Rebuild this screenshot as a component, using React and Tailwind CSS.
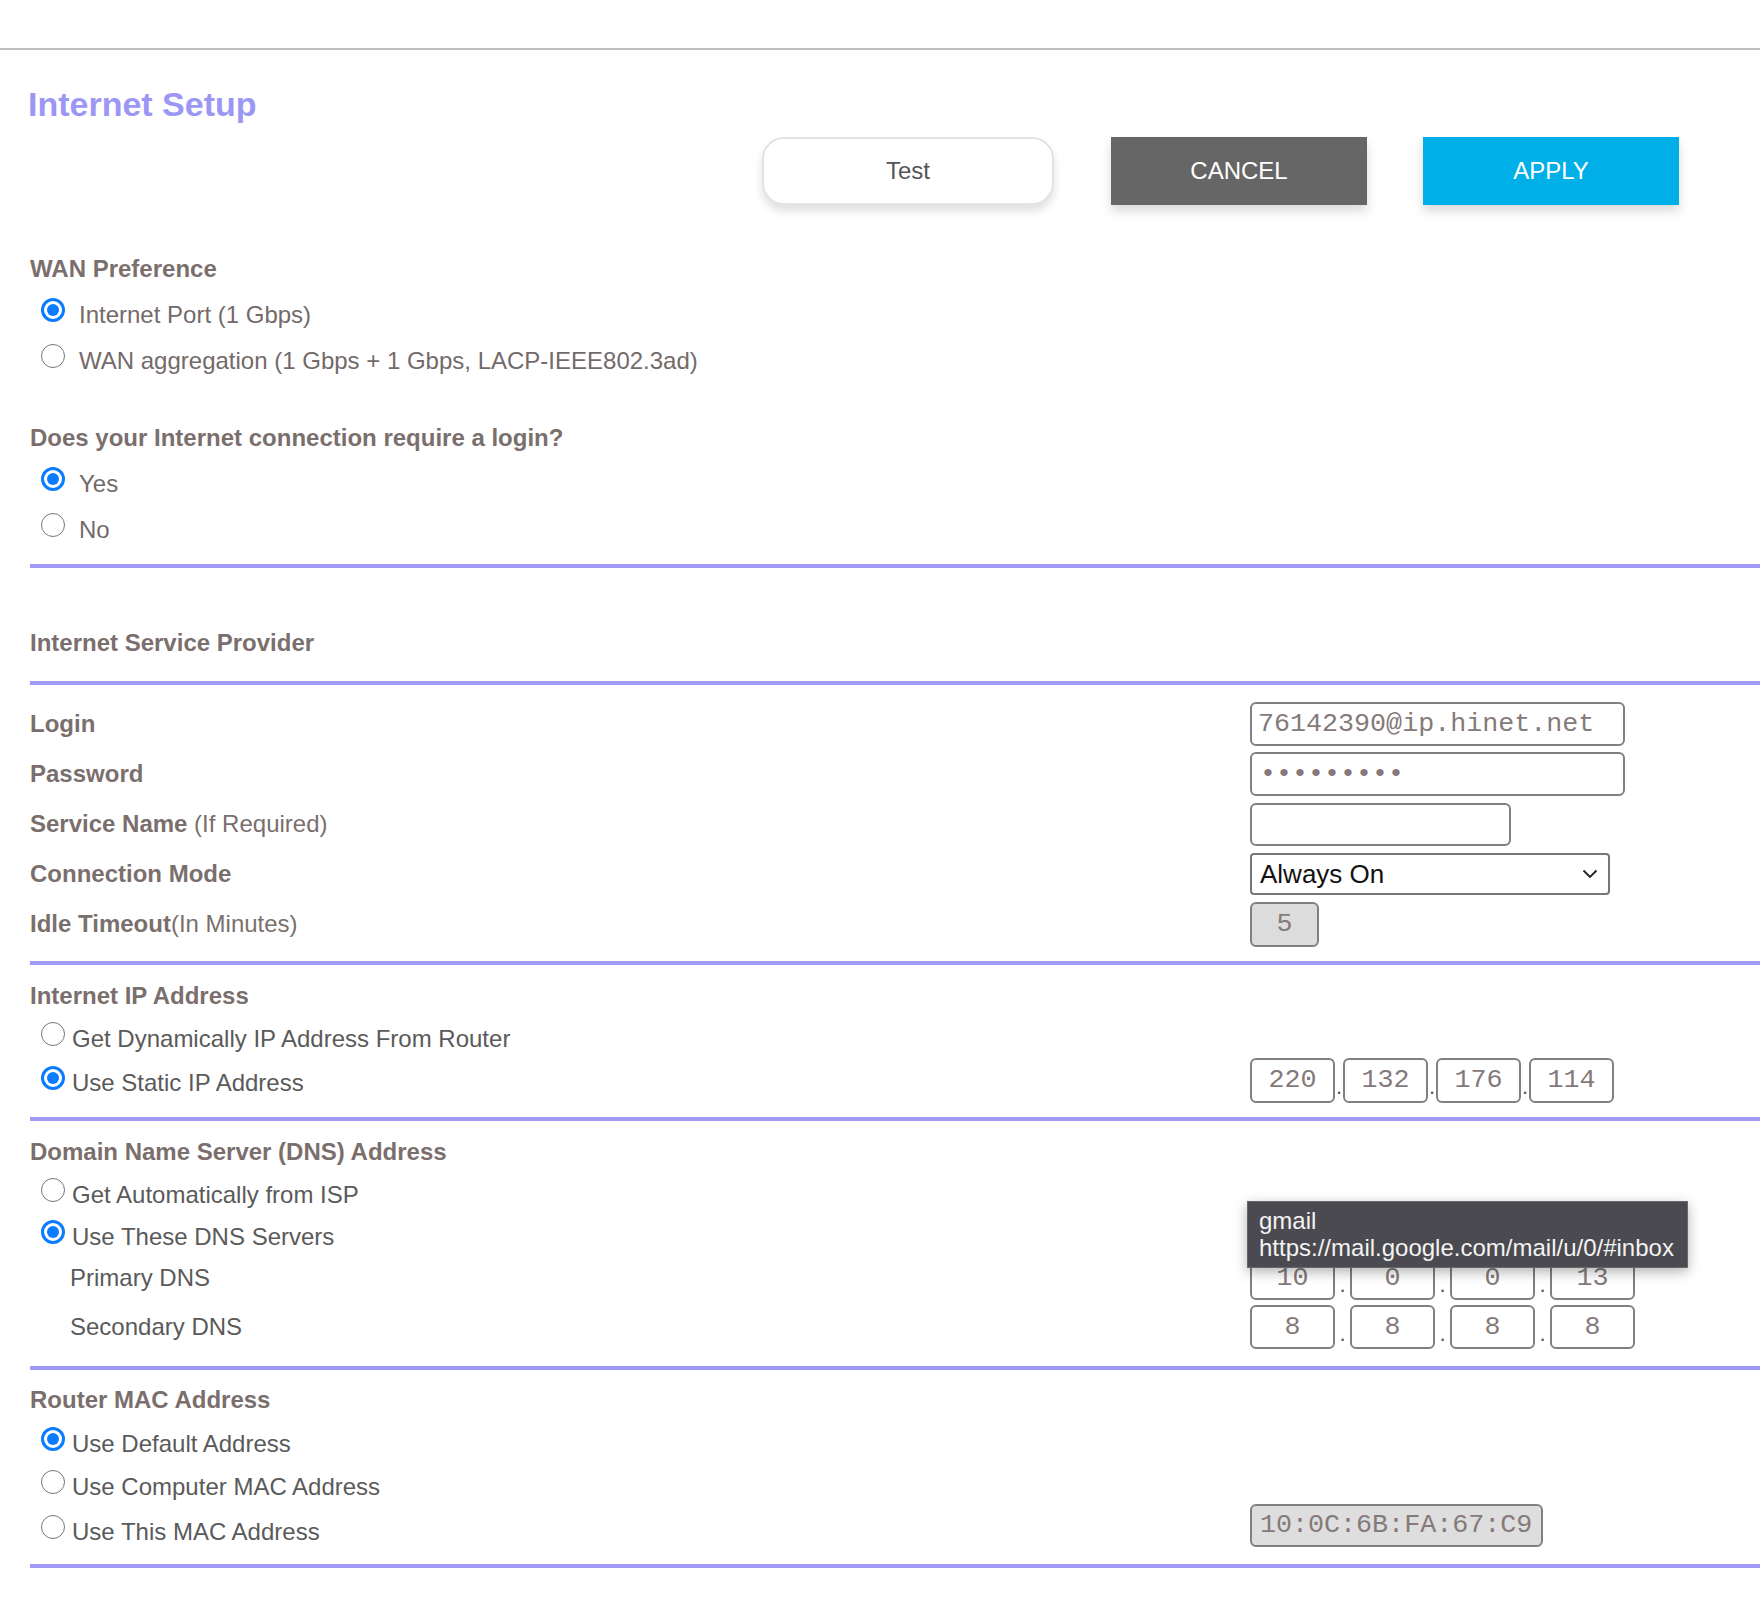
import React from "react";

const LABEL = "text-[#7a6f6d]";
const MONO = "font-['Liberation_Mono','Courier_New',monospace]";

function Radio({ checked }) {
  if (checked) {
    return (
      <span className="mb-[4px] flex h-[24px] w-[24px] shrink-0 items-center justify-center rounded-full border-[3px] border-[#0a7cff] bg-white">
        <span className="h-[12px] w-[12px] rounded-full bg-[#0a7cff]" />
      </span>
    );
  }
  return (
    <span className="mb-[4px] h-[24px] w-[24px] shrink-0 rounded-full border-[1.5px] border-[#767676] bg-white" />
  );
}

function RadioRow({ checked, label, h, gap, color, right }) {
  return (
    <div className={`flex items-center ${h}`}>
      <div className="flex w-[1220px] items-center">
        <span className="ml-[11px] flex items-center">
          <Radio checked={checked} />
        </span>
        <span className={`${gap} pt-[6px] text-[24px] leading-[28px] ${color}`}>{label}</span>
      </div>
      {right}
    </div>
  );
}

function Header({ children, className = "" }) {
  return (
    <div className={`flex h-[32px] items-center text-[24px] font-bold leading-[28px] ${LABEL} ${className}`}>
      {children}
    </div>
  );
}

function Rule({ className = "" }) {
  return <div className={`h-[4px] bg-[#9f9af8] ${className}`} />;
}

function Box({ className = "", children, center = true }) {
  return (
    <div
      className={`flex items-center rounded-[6px] border-2 border-[#808080] ${MONO} text-[26.7px] leading-none text-[#857a79] ${
        center ? "justify-center" : "pl-[6px]"
      } ${className}`}
    >
      {children}
    </div>
  );
}

function IPGroup({ values, sep, boxH }) {
  return (
    <div className="flex items-center">
      {values.map((v, i) => (
        <React.Fragment key={i}>
          {i > 0 && (
            <span className={`${sep} pt-[14px] text-center text-[22px] leading-none text-[#555]`}>.</span>
          )}
          <Box className={`w-[85px] ${boxH}`}>{v}</Box>
        </React.Fragment>
      ))}
    </div>
  );
}

function FieldRow({ label, children }) {
  return (
    <div className="flex h-[50px] items-center">
      <div className={`w-[1220px] text-[24px] leading-[28px] ${LABEL}`}>{label}</div>
      {children}
    </div>
  );
}

export default function App() {
  const optA = "text-[#736a69]";
  const optB = "text-[#5a5a5a]";
  return (
    <div className="relative h-[1598px] w-[1760px] overflow-hidden bg-white font-['Liberation_Sans',Arial,sans-serif]">
      <div className="h-[50px] border-b-2 border-[#bfbfbf]" />
      <div className="pl-[30px]">
        <h1 className="ml-[-2px] mt-[34px] flex h-[40px] items-center text-[34px] font-bold leading-[40px] text-[#9c97f5]">
          Internet Setup
        </h1>

        <div className="mt-[13px] flex justify-end pr-[81px]">
          <button className="h-[68px] w-[292px] rounded-[22px] border-2 border-[#e3e3e3] bg-white text-[24px] text-[#555] shadow-[0_6px_10px_rgba(0,0,0,0.13)]">
            Test
          </button>
          <button className="ml-[57px] h-[68px] w-[256px] bg-[#666666] text-[24px] text-white shadow-[0_6px_10px_rgba(0,0,0,0.15)]">
            CANCEL
          </button>
          <button className="ml-[56px] h-[68px] w-[256px] bg-[#00afe8] text-[24px] text-white shadow-[0_6px_10px_rgba(0,0,0,0.15)]">
            APPLY
          </button>
        </div>

        <Header className="mt-[48px]">WAN Preference</Header>
        <div className="mt-[4px]">
          <RadioRow checked h="h-[46px]" gap="ml-[14px]" color={optA} label="Internet Port (1 Gbps)" />
          <RadioRow h="h-[46px]" gap="ml-[14px]" color={optA} label="WAN aggregation (1 Gbps + 1 Gbps, LACP-IEEE802.3ad)" />
        </div>

        <Header className="mt-[41px]">Does your Internet connection require a login?</Header>
        <div className="mt-[4px]">
          <RadioRow checked h="h-[46px]" gap="ml-[14px]" color={optA} label="Yes" />
          <RadioRow h="h-[46px]" gap="ml-[14px]" color={optA} label="No" />
        </div>
        <Rule className="mt-[14px]" />

        <Header className="mt-[59px]">Internet Service Provider</Header>
        <Rule className="mt-[22px]" />

        <div className="mt-[14px]">
          <FieldRow label={<span className="font-bold">Login</span>}>
            <Box center={false} className="h-[44px] w-[375px]">76142390@ip.hinet.net</Box>
          </FieldRow>
          <FieldRow label={<span className="font-bold">Password</span>}>
            <Box center={false} className="h-[44px] w-[375px]">
              <span className="pl-[2px] text-[26.7px]">•••••••••</span>
            </Box>
          </FieldRow>
          <FieldRow
            label={
              <>
                <span className="font-bold">Service Name</span> (If Required)
              </>
            }
          >
            <Box center={false} className="h-[43px] w-[261px]" />
          </FieldRow>
          <FieldRow label={<span className="font-bold">Connection Mode</span>}>
            <div className="flex h-[42px] w-[360px] items-center justify-between rounded-[4px] border-2 border-[#777] pl-[8px] pr-[10px] text-[26px] leading-none text-[#111]">
              <span>Always On</span>
              <svg width="16" height="10" viewBox="0 0 16 10">
                <path d="M1.5 1.5 L8 8 L14.5 1.5" fill="none" stroke="#222" strokeWidth="1.8" />
              </svg>
            </div>
          </FieldRow>
          <FieldRow
            label={
              <>
                <span className="font-bold">Idle Timeout</span>(In Minutes)
              </>
            }
          >
            <Box className="h-[45px] w-[69px] border-[#8a8a8a] bg-[#dcdcdc]">5</Box>
          </FieldRow>
        </div>
        <Rule className="mt-[12px]" />

        <Header className="mt-[15px]">Internet IP Address</Header>
        <div className="mt-[2px]">
          <RadioRow h="h-[44px]" gap="ml-[7px]" color={optB} label="Get Dynamically IP Address From Router" />
          <RadioRow
            checked
            h="h-[44px]"
            gap="ml-[7px]"
            color={optB}
            label="Use Static IP Address"
            right={<IPGroup values={["220", "132", "176", "114"]} sep="w-[8px]" boxH="h-[45px]" />}
          />
        </div>
        <Rule className="mt-[15px]" />

        <Header className="mt-[15px]">Domain Name Server (DNS) Address</Header>
        <div className="mt-[3px]">
          <RadioRow h="h-[42px]" gap="ml-[7px]" color={optB} label="Get Automatically from ISP" />
          <RadioRow checked h="h-[42px]" gap="ml-[7px]" color={optB} label="Use These DNS Servers" />
          <div className="flex h-[46px] items-center">
            <div className={`w-[1220px] pl-[40px] text-[24px] leading-[28px] ${optB}`}>Primary DNS</div>
            <IPGroup values={["10", "0", "0", "13"]} sep="w-[15px]" boxH="h-[44px]" />
          </div>
          <div className="flex h-[52px] items-center">
            <div className={`w-[1220px] pl-[40px] text-[24px] leading-[28px] ${optB}`}>Secondary DNS</div>
            <IPGroup values={["8", "8", "8", "8"]} sep="w-[15px]" boxH="h-[44px]" />
          </div>
        </div>
        <Rule className="mt-[13px]" />

        <Header className="mt-[14px]">Router MAC Address</Header>
        <div className="mt-[4px]">
          <RadioRow checked h="h-[42px]" gap="ml-[7px]" color={optB} label="Use Default Address" />
          <RadioRow h="h-[44px]" gap="ml-[7px]" color={optB} label="Use Computer MAC Address" />
          <RadioRow
            h="h-[46px]"
            gap="ml-[7px]"
            color={optB}
            label="Use This MAC Address"
            right={
              <Box center={false} className="mb-[7px] h-[43px] w-[293px] bg-[#dedede] pl-[8px]">
                10:0C:6B:FA:67:C9
              </Box>
            }
          />
        </div>
        <Rule className="mt-[12px]" />
      </div>

      <div className="absolute left-[1247px] top-[1201px] h-[67px] w-[441px] border border-[#68676c] bg-[#4b4a50] px-[11px] pt-[5px] text-[24px] leading-[27px] text-[#f3f3f3] shadow-[0_4px_12px_rgba(0,0,0,0.3)]">
        <div>gmail</div>
        <div>https://mail.google.com/mail/u/0/#inbox</div>
      </div>
    </div>
  );
}
